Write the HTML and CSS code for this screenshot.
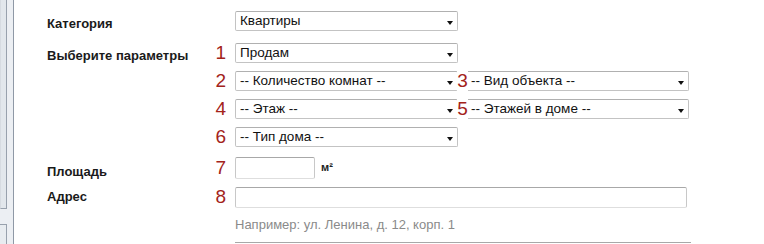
FILE: index.html
```html
<!DOCTYPE html>
<html lang="ru">
<head>
<meta charset="utf-8">
<title>Форма</title>
<link rel="stylesheet" href="styles.css">
</head>
<body>
<div class="page">
  <div class="strip">
    <div class="strip-inner"></div>
    <div class="strip-box"></div>
  </div>
  <form class="form">
    <div class="row r1">
      <div class="label">Категория</div>
      <div class="num"></div>
      <div class="ctrls">
        <span class="sel"><select><option>Квартиры</option></select></span>
      </div>
    </div>
    <div class="row r2">
      <div class="label">Выберите параметры</div>
      <div class="num">1</div>
      <div class="ctrls">
        <span class="sel"><select><option>Продам</option></select></span>
      </div>
    </div>
    <div class="row r3">
      <div class="label"></div>
      <div class="num">2</div>
      <div class="ctrls">
        <span class="sel"><select><option>-- Количество комнат --</option></select></span>
        <div class="num mid">3</div>
        <span class="sel"><select><option>-- Вид объекта --</option></select></span>
      </div>
    </div>
    <div class="row r3">
      <div class="label"></div>
      <div class="num">4</div>
      <div class="ctrls">
        <span class="sel"><select><option>-- Этаж --</option></select></span>
        <div class="num mid">5</div>
        <span class="sel"><select><option>-- Этажей в доме --</option></select></span>
      </div>
    </div>
    <div class="row r3">
      <div class="label"></div>
      <div class="num">6</div>
      <div class="ctrls">
        <span class="sel"><select><option>-- Тип дома --</option></select></span>
      </div>
    </div>
    <div class="row r6">
      <div class="label lbl-area">Площадь</div>
      <div class="num">7</div>
      <div class="ctrls">
        <input class="inp inp-area" type="text">
        <span class="unit">м²</span>
      </div>
    </div>
    <div class="row r7">
      <div class="label lbl-addr">Адрес</div>
      <div class="num">8</div>
      <div class="ctrls">
        <input class="inp inp-addr" type="text">
      </div>
    </div>
    <div class="hint">Например: ул. Ленина, д. 12, корп. 1</div>
    <div class="rule"></div>
  </form>
</div>
</body>
</html>
```

FILE: styles.css
```css
html, body {
  margin: 0;
  padding: 0;
  background: #ffffff;
}
body {
  font-family: "Liberation Sans", Arial, sans-serif;
  color: #1a1a1a;
  width: 764px;
  height: 244px;
  overflow: hidden;
}
.page {
  display: flex;
  height: 244px;
}
.strip {
  width: 13px;
  flex: none;
  background: #eceff3;
  border-right: 1px solid #8f99a6;
  display: flex;
  flex-direction: column;
}
.strip-inner {
  width: 5px;
  height: 217px;
  background: #e2e7ec;
  border-left: 1px solid #d6dbe1;
  border-right: 1px solid #98a1ad;
  border-bottom: 1px solid #98a1ad;
}
.strip-box {
  margin-top: 15px;
  width: 6px;
  height: 20px;
  background: #e8ecf0;
  border-top: 1px solid #98a1ad;
  border-right: 1px solid #98a1ad;
}
.form {
  margin: 0;
  padding: 11px 0 0 33px;
  display: flex;
  flex-direction: column;
}
.row {
  display: flex;
  align-items: flex-end;
}
.r2 { margin-top: 12px; }
.r3 { margin-top: 8px; }
.r6 { margin-top: 10px; }
.r7 { margin-top: 8px; }
.label {
  width: 158px;
  flex: none;
  font-size: 13px;
  line-height: 14px;
  font-weight: bold;
  color: #1a1a1a;
}
.lbl-area { margin-bottom: 0; }
.lbl-addr { margin-bottom: 4px; }
.num {
  width: 21px;
  flex: none;
  font-size: 19px;
  line-height: 20px;
  color: #a3231b;
  text-align: right;
  margin-right: 9px;
}
.r6 .num, .r7 .num { margin-bottom: 1px; }
.num.mid {
  width: 11px;
  margin: 0;
  background: #ffffff;
  text-align: center;
  position: relative;
  z-index: 1;
  margin-left: -1px;
  margin-right: -2px;
}
.ctrls {
  display: flex;
  align-items: flex-end;
}
.sel {
  position: relative;
  display: block;
  width: 223px;
  height: 20px;
}
.sel::after {
  content: "";
  position: absolute;
  right: 5px;
  top: 10px;
  border-left: 3.5px solid transparent;
  border-right: 3.5px solid transparent;
  border-top: 4px solid #111111;
  pointer-events: none;
}
.sel select {
  -webkit-appearance: none;
  appearance: none;
  box-sizing: border-box;
  width: 223px;
  height: 20px;
  margin: 0;
  padding: 0 16px 0 4px;
  border: 1px solid #c3c3c3;
  border-top-color: #b0b0b0;
  border-radius: 2px;
  background: #ffffff;
  font-family: "Liberation Sans", Arial, sans-serif;
  font-size: 13.5px;
  line-height: 18px;
  color: #111111;
}
.inp {
  box-sizing: border-box;
  margin: 0;
  padding: 0 4px;
  background: #ffffff;
  border: 1px solid #c8c8c8;
  border-top-color: #a8a8a8;
  border-bottom-color: #dedede;
  border-radius: 2px;
  font-family: "Liberation Sans", Arial, sans-serif;
  font-size: 13px;
}
.inp-area {
  width: 80px;
  height: 22px;
}
.inp-addr {
  width: 452px;
  height: 21px;
}
.unit {
  font-size: 11px;
  font-weight: bold;
  line-height: 14px;
  color: #222222;
  margin-left: 6px;
  margin-bottom: 5px;
}
.hint {
  margin-left: 188px;
  margin-top: 9px;
  font-size: 13px;
  line-height: 15px;
  color: #8a8a8a;
}
.rule {
  margin-left: 188px;
  margin-top: 10px;
  width: 456px;
  height: 0;
  border-top: 1px solid #a8a8a8;
}
```
